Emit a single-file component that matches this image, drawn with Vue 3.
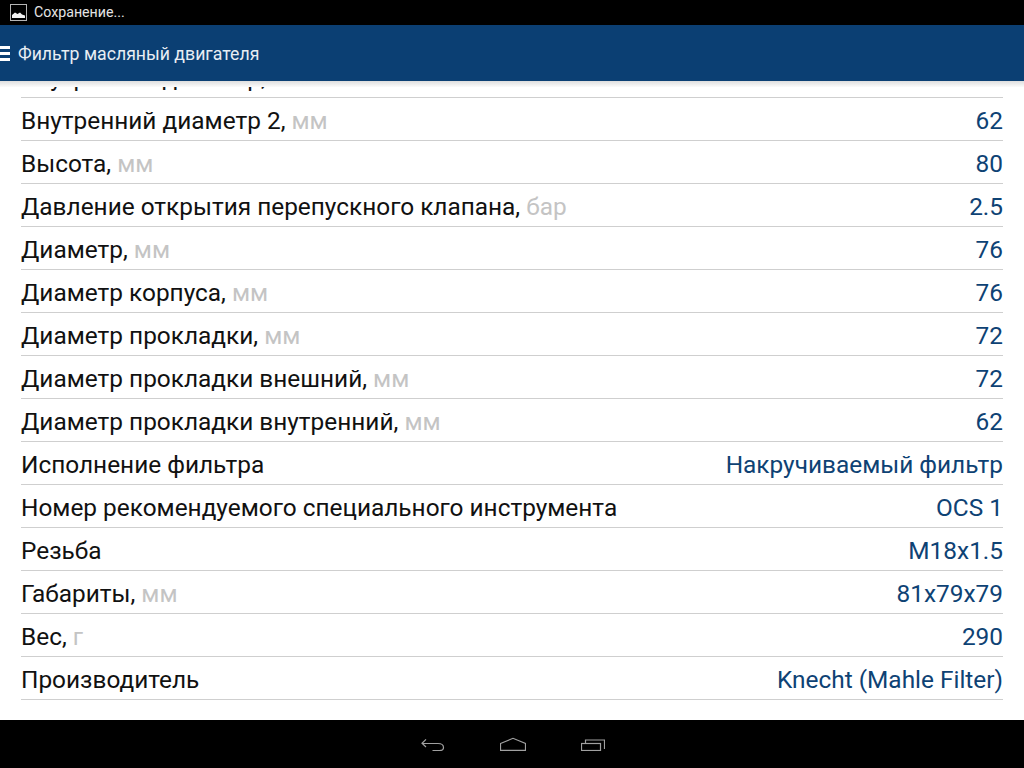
<script setup>
const specs = [
  { name: 'Внутренний диаметр,', unit: 'мм', value: '70' },
  { name: 'Внутренний диаметр 2,', unit: 'мм', value: '62' },
  { name: 'Высота,', unit: 'мм', value: '80' },
  { name: 'Давление открытия перепускного клапана,', unit: 'бар', value: '2.5' },
  { name: 'Диаметр,', unit: 'мм', value: '76' },
  { name: 'Диаметр корпуса,', unit: 'мм', value: '76' },
  { name: 'Диаметр прокладки,', unit: 'мм', value: '72' },
  { name: 'Диаметр прокладки внешний,', unit: 'мм', value: '72' },
  { name: 'Диаметр прокладки внутренний,', unit: 'мм', value: '62' },
  { name: 'Исполнение фильтра', unit: '', value: 'Накручиваемый фильтр' },
  { name: 'Номер рекомендуемого специального инструмента', unit: '', value: 'OCS 1' },
  { name: 'Резьба', unit: '', value: 'M18x1.5' },
  { name: 'Габариты,', unit: 'мм', value: '81x79x79' },
  { name: 'Вес,', unit: 'г', value: '290' },
  { name: 'Производитель', unit: '', value: 'Knecht (Mahle Filter)' },
]
</script>

<template>
  <div class="screen">
    <div class="status_bar">
      <svg class="status_icon" width="17" height="17" viewBox="0 0 17 17">
        <rect x="0.5" y="0.5" width="16" height="16" fill="none" stroke="#b5b5b5" />
        <path d="M2 14V11L5 8.500L7.500 10L10 8.500L12 10.500L15 11.500V14Z" fill="#f2f2f2" />
      </svg>
      <span>Сохранение...</span>
    </div>

    <header class="app_bar">
      <div class="menu_icon"><i></i><i></i><i></i></div>
      <span class="app_title">Фильтр масляный двигателя</span>
    </header>

    <main class="content">
      <ul class="spec_list">
        <li v-for="spec in specs" :key="spec.name" class="spec_row">
          <span class="spec_name">{{ spec.name }} <em v-if="spec.unit">{{ spec.unit }}</em></span>
          <span class="spec_value">{{ spec.value }}</span>
        </li>
      </ul>
    </main>

    <nav class="nav_bar">
      <svg width="24" height="14" viewBox="0 0 24 14" fill="none" stroke="#a0a0a0" stroke-width="1.2">
        <path d="M5 2.300L1 6.300L5 10M1 6.500H17C20.500 6.500 22.500 7.500 22.500 10.500C22.500 13 21 13.600 18.500 13.600H11.500" />
      </svg>
      <svg width="26" height="14" viewBox="0 0 26 14" fill="none" stroke="#a0a0a0" stroke-width="1.2">
        <path d="M0.500 6.500L13 1.300L25.500 6.500V13.400H0.500Z" />
      </svg>
      <svg width="24" height="14" viewBox="0 0 24 14" fill="none" stroke="#a0a0a0" stroke-width="1.2">
        <rect x="0.500" y="6.500" width="19" height="7" />
        <path d="M4.500 6V3H23.500V12" />
      </svg>
    </nav>
  </div>
</template>

<style>
body {
  margin: 0;
  overflow: hidden;
}
</style>

<style scoped>
.screen {
  width: 1024px;
  height: 768px;
  display: flex;
  flex-direction: column;
  background: #fff;
  font-family: Roboto, sans-serif;
  overflow: hidden;
}

.status_bar {
  height: 25px;
  flex: none;
  display: flex;
  align-items: center;
  gap: 7px;
  padding-left: 10px;
  background: #000;
  color: #e4e4e4;
  font-size: 14.2px;
}

.status_bar span {
  margin-bottom: 2px;
}

.app_bar {
  position: relative;
  z-index: 2;
  height: 56px;
  flex: none;
  display: flex;
  align-items: center;
  gap: 8px;
  background: #0b3f73;
  color: #e8eef4;
  font-size: 17.7px;
}

/* тень под шапкой перекрывает верхнюю строку */
.app_bar::after {
  content: '';
  position: absolute;
  left: 0;
  right: 0;
  top: 100%;
  height: 6px;
  background: linear-gradient(#dedede, #fbfbfb);
}

.app_title {
  margin-top: 1px;
}

.menu_icon {
  width: 10px;
  display: flex;
  flex-direction: column;
  gap: 3px;
}

.menu_icon i {
  display: block;
  height: 3px;
  background: #fff;
}

.content {
  flex: 1;
  overflow: hidden;
}

.spec_list {
  list-style: none;
  margin: -26px 21px 0;
  padding: 0;
}

.spec_row {
  box-sizing: border-box;
  height: 43px;
  padding-top: 2px;
  display: flex;
  align-items: center;
  justify-content: space-between;
  border-bottom: 1px solid #cfcfcf;
  font-size: 24.4px;
  color: #111;
}

.spec_name em {
  font-style: normal;
  color: #c4c4c4;
}

.spec_value {
  color: #0e4274;
}

.nav_bar {
  height: 48px;
  flex: none;
  display: flex;
  align-items: center;
  justify-content: center;
  gap: 55px;
  padding-left: 2px;
  background: #000;
}
</style>
